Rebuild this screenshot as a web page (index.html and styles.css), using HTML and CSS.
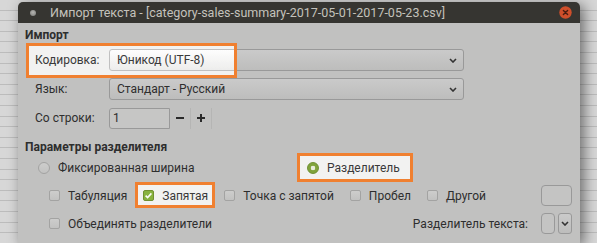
FILE: index.html
```html
<!DOCTYPE html>
<html lang="ru">
<head>
    <meta charset="UTF-8">
    <meta name="viewport" content="width=device-width, initial-scale=1.0">
    <title>Импорт текста</title>
    <link rel="stylesheet" href="styles.css">
</head>
<body>
    <div class="desk">
        <div class="dialog">
            <!-- Title bar -->
            <div class="titlebar">
                <span class="title-dot"></span>
                <span class="title">Импорт текста - [category-sales-summary-2017-05-01-2017-05-23.csv]</span>
                <span class="close-btn">
                    <svg viewBox="0 0 13 13" width="13" height="13">
                        <circle cx="6.5" cy="6.5" r="6.2" fill="#cf4f2b" />
                        <path d="M4.4 4.4 L8.6 8.6 M8.6 4.4 L4.4 8.6" stroke="#4a1c10" stroke-width="1.4" stroke-linecap="round" />
                    </svg>
                </span>
            </div>

            <div class="content">
                <!-- Import section -->
                <div class="section-title">Импорт</div>

                <div class="form-row spot spot-encoding">
                    <label class="row-label">Кодировка:</label>
                    <div class="combo">
                        <span>Юникод (UTF-8)</span>
                        <svg class="chevron" viewBox="0 0 8 5" width="8" height="5"><path d="M1 1 L4 4 L7 1" /></svg>
                    </div>
                </div>

                <div class="form-row">
                    <label class="row-label">Язык:</label>
                    <div class="combo">
                        <span>Стандарт - Русский</span>
                        <svg class="chevron" viewBox="0 0 8 5" width="8" height="5"><path d="M1 1 L4 4 L7 1" /></svg>
                    </div>
                </div>

                <div class="form-row">
                    <label class="row-label">Со строки:</label>
                    <div class="spin">
                        <div class="spin-entry">1</div>
                        <div class="spin-btn">
                            <svg viewBox="0 0 10 10" width="10" height="10"><path d="M1 5 H9" /></svg>
                        </div>
                        <div class="spin-btn">
                            <svg viewBox="0 0 10 10" width="10" height="10"><path d="M1 5 H9 M5 1 V9" /></svg>
                        </div>
                    </div>
                </div>

                <!-- Separator options -->
                <div class="section-title section-gap">Параметры разделителя</div>

                <div class="radio-row">
                    <div class="option">
                        <span class="radio"></span>
                        <span>Фиксированная ширина</span>
                    </div>
                    <div class="option spot spot-separator">
                        <span class="radio checked"></span>
                        <span>Разделитель</span>
                    </div>
                </div>

                <div class="check-row">
                    <div class="option">
                        <span class="check"></span>
                        <span>Табуляция</span>
                    </div>
                    <div class="option spot spot-comma">
                        <span class="check checked">
                            <svg viewBox="0 0 11 11" width="11" height="11"><path d="M2.6 5.6 L4.6 7.6 L8.4 3.4" /></svg>
                        </span>
                        <span>Запятая</span>
                    </div>
                    <div class="option">
                        <span class="check"></span>
                        <span>Точка с запятой</span>
                    </div>
                    <div class="option">
                        <span class="check"></span>
                        <span>Пробел</span>
                    </div>
                    <div class="option">
                        <span class="check"></span>
                        <span>Другой</span>
                    </div>
                    <div class="entry entry-other"></div>
                </div>

                <div class="check-row">
                    <div class="option">
                        <span class="check"></span>
                        <span>Объединять разделители</span>
                    </div>
                    <span class="quote-label">Разделитель текста:</span>
                    <div class="entry entry-quote"></div>
                    <div class="combo-btn">
                        <svg class="chevron" viewBox="0 0 8 5" width="8" height="5"><path d="M1 1 L4 4 L7 1" /></svg>
                    </div>
                </div>
            </div>
        </div>
    </div>
</body>
</html>
```

FILE: styles.css
```css
/* Page: dimmed spreadsheet behind the dialog */
:root {
    --dim-bg: #c1c1c0;
    --dim-text: #2e2e2e;
    --dim-border: #999999;
    --accent: #f08030;
}

body {
    margin: 0;
    width: 597px;
    height: 243px;
    overflow: hidden;
    font-family: Roboto, "Noto Sans", sans-serif;
    font-size: 12px;
    color: var(--dim-text);
    background-color: #d7d7d7;
    background-image: repeating-linear-gradient(to bottom, transparent 0, transparent 9.6px, #bcbcbc 9.6px, #bcbcbc 10.6px);
}

.desk {
    padding: 2px 0 0 18px;
}

/* Dialog window */
.dialog {
    position: relative;
    width: 562px;
    height: 241px;
    background-color: var(--dim-bg);
    border-radius: 5px 5px 0 0;
    box-shadow: 4px 3px 14px rgba(0, 0, 0, 0.5);
}

.titlebar {
    height: 21px;
    display: flex;
    align-items: center;
    background-color: #363531;
    border-radius: 5px 5px 0 0;
    padding-left: 12px;
    padding-right: 8px;
}

.title-dot {
    width: 6px;
    height: 6px;
    border-radius: 50%;
    background: radial-gradient(circle at 50% 40%, #b5b5b2, #7a7a77);
}

.title {
    margin-left: 14px;
    color: #c4c2bc;
    font-size: 12.5px;
    white-space: nowrap;
}

.close-btn {
    margin-left: auto;
    display: flex;
}

/* Content */
.content {
    padding: 4px 8px 0 7px;
}

.section-title {
    font-weight: 700;
    line-height: 16px;
    height: 16px;
}

.section-gap {
    margin-top: 10px;
}

.form-row {
    display: flex;
    align-items: center;
    height: 22px;
    margin: 7px 0 0 10px;
}

.section-title + .form-row {
    margin-top: 6px;
}

.row-label {
    width: 74px;
    flex-shrink: 0;
}

.combo {
    width: 355px;
    height: 22px;
    box-sizing: border-box;
    display: flex;
    align-items: center;
    justify-content: space-between;
    padding: 0 6px 0 7px;
    border: 1px solid var(--dim-border);
    border-radius: 3px;
    background: linear-gradient(#cacaca, #bdbdbc);
}

.chevron path {
    fill: none;
    stroke: #333;
    stroke-width: 1.6;
}

/* Spin button */
.spin {
    display: flex;
    height: 21px;
}

.spin-entry {
    width: 61px;
    box-sizing: border-box;
    padding-left: 3px;
    line-height: 19px;
    border: 1px solid var(--dim-border);
    border-radius: 3px 0 0 3px;
    background-color: #c6c6c5;
}

.spin-btn {
    width: 21px;
    display: flex;
    align-items: center;
    justify-content: center;
    border-right: 1px solid #b5b5b4;
    box-sizing: border-box;
}

.spin-btn path {
    stroke: #2a2a2a;
    stroke-width: 2;
}

/* Radio and check options */
.radio-row {
    display: grid;
    grid-template-columns: 269px auto;
    justify-items: start;
    justify-content: start;
    height: 20px;
    margin-top: 3px;
    padding-left: 13px;
}

.check-row {
    display: flex;
    align-items: center;
    gap: 16px;
    height: 21px;
    margin-top: 7px;
    padding-left: 24px;
}

.option {
    display: flex;
    align-items: center;
    gap: 8px;
    height: 20px;
    white-space: nowrap;
}

.radio {
    width: 12px;
    height: 12px;
    box-sizing: border-box;
    border-radius: 50%;
    border: 1px solid #a3a3a2;
    background: linear-gradient(#cdcdcc, #c2c2c1);
}

.radio.checked {
    border-color: #587228;
    background: radial-gradient(circle, #b9bcae 0, #b9bcae 2px, #66822f 2.6px);
}

.check {
    width: 11px;
    height: 11px;
    box-sizing: border-box;
    display: flex;
    border-radius: 2px;
    border: 1px solid #a3a3a2;
    background: linear-gradient(#cdcdcc, #c2c2c1);
}

.check.checked {
    border-color: #5a7326;
    background: #6c8e32;
}

.check svg {
    margin: -1px;
}

.check path {
    fill: none;
    stroke: #c8c8c6;
    stroke-width: 1.6;
}

.entry {
    box-sizing: border-box;
    border: 1px solid var(--dim-border);
    border-radius: 4px;
    background-color: #c4c4c3;
}

.entry-other {
    width: 31px;
    height: 21px;
    margin-left: auto;
}

.quote-label {
    margin-left: auto;
    margin-right: -3px;
}

.entry-quote {
    width: 14px;
    height: 21px;
}

.combo-btn {
    width: 14px;
    height: 21px;
    margin-left: -13px;
    box-sizing: border-box;
    display: flex;
    align-items: center;
    justify-content: center;
    border: 1px solid var(--dim-border);
    border-radius: 3px;
    background: linear-gradient(#cacaca, #bdbdbc);
}

/* Highlight frames drawn over the dimmed screenshot */
.spot {
    position: relative;
}

.spot::after {
    content: '';
    position: absolute;
    border: 3px solid var(--accent);
    backdrop-filter: brightness(1.255);
    pointer-events: none;
}

.spot-encoding::after {
    left: -9px;
    top: -6px;
    width: 205px;
    height: 29px;
}

.spot-separator::after {
    inset: -5px -13px -4px -10px;
}

.spot-comma::after {
    inset: -4px -7px -2px -8px;
}
```
